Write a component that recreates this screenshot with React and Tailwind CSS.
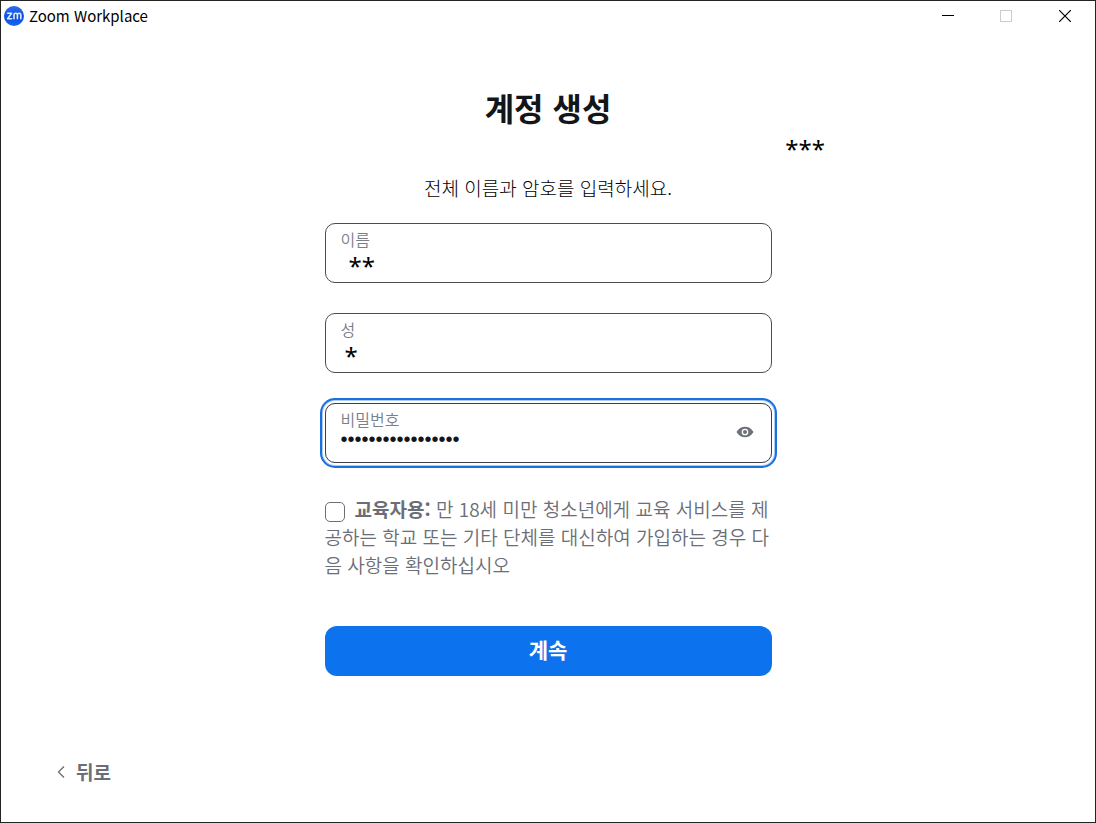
import { useState } from 'react'

const FieldBox = ({ id, label, children, active }) => (
  <div
    className={
      active
        ? 'flex h-[60px] items-center rounded-[10px] border border-[#3d3f46] px-[15px] shadow-[0_0_0_2px_#fff,0_0_0_3px_#a9cbf6,0_0_0_5px_#1a70dc]'
        : 'flex h-[60px] items-center rounded-[10px] border border-[#4a4c52] px-[15px]'
    }
  >
    <div className="flex h-full min-w-0 flex-1 flex-col pt-[5px]">
      <label htmlFor={id} className="text-[16px] leading-5 font-[350] text-[#7a808a]">
        {label}
      </label>
      {children}
    </div>
    {active && (
      <button type="button" aria-label="비밀번호 표시" className="mr-[2px] shrink-0">
        <svg width="18" height="18" viewBox="0 0 18 18" fill="none">
          <path d="M0.5 8C2.5 4.500 5.5 2.800 9 2.800S15.500 4.500 17.500 8C15.500 11.500 12.500 13.200 9 13.200S2.500 11.500 0.500 8Z" fill="#6e7179" />
          <circle cx="9" cy="8" r="2.700" stroke="#fff" strokeWidth="1.300" />
        </svg>
      </button>
    )}
  </div>
)

const TitleBar = () => (
  <header className="flex h-[30px] items-center justify-between pl-[3px]">
    <div className="flex items-center gap-[5px]">
      <svg width="20" height="20" viewBox="0 0 20 20">
        <defs>
          <linearGradient id="logo" x1="0" y1="0" x2="0" y2="1">
            <stop offset="0" stopColor="#2f6bea" />
            <stop offset="0.6" stopColor="#0b50e0" />
            <stop offset="1" stopColor="#1b66f0" />
          </linearGradient>
        </defs>
        <circle cx="10" cy="10" r="10" fill="url(#logo)" />
        <g fill="none" stroke="#dfe9ff" strokeWidth="1.600" strokeLinecap="round" strokeLinejoin="round">
          <path d="M3.600 7.300H7.600L3.600 12.700H7.600" />
          <path d="M10 12.700V9C10 6.700 13.400 6.700 13.400 9V12.700M13.400 9C13.400 6.700 16.800 6.700 16.800 9V12.700" />
        </g>
      </svg>
      <span className="text-[15px] leading-5 text-black">Zoom Workplace</span>
    </div>
    <div className="flex h-full items-center">
      <button type="button" aria-label="최소화" className="flex h-full w-[58px] items-center justify-center">
        <svg width="12" height="12" viewBox="0 0 12 12" stroke="#000" shapeRendering="crispEdges">
          <path d="M0 5.500H12" />
        </svg>
      </button>
      <button type="button" aria-label="최대화" disabled className="flex h-full w-[58px] items-center justify-center">
        <svg width="12" height="12" viewBox="0 0 12 12" fill="none" stroke="#ccc" shapeRendering="crispEdges">
          <rect x="0.500" y="0.500" width="11" height="11" />
        </svg>
      </button>
      <button type="button" aria-label="닫기" className="flex h-full w-[60px] items-center justify-center">
        <svg width="12" height="12" viewBox="0 0 12 12" stroke="#000" strokeWidth="1.200">
          <path d="M0 0L12 12M12 0L0 12" />
        </svg>
      </button>
    </div>
  </header>
)

export default function App() {
  const [firstName, setFirstName] = useState('**')
  const [lastName, setLastName] = useState('*')
  const [password, setPassword] = useState('password123456789')
  const [educator, setEducator] = useState(false)

  return (
    <div
      lang="ko"
      className="flex min-h-screen flex-col border border-[#242424] bg-white font-['Noto_Sans_CJK_KR',sans-serif]"
    >
      <TitleBar />

      <main className="mx-auto w-full max-w-[554px] pt-14">
        <h1 className="text-center text-[32px] leading-10 font-bold text-[#131619]">계정 생성</h1>
        <p className="pt-[6px] text-right font-['Noto_Sans',sans-serif] text-[24px] leading-8 text-black">***</p>

        <form className="mx-auto w-full max-w-[447px] pt-2" onSubmit={(e) => e.preventDefault()}>
          <p className="pb-5 text-center text-[19px] leading-[30px] font-light text-black">전체 이름과 암호를 입력하세요.</p>

          <div className="flex flex-col gap-[30px]">
            <FieldBox id="first-name" label="이름">
              <input
                id="first-name"
                value={firstName}
                onChange={(e) => setFirstName(e.target.value)}
                className="h-[34px] w-full pl-2 font-['Noto_Sans',sans-serif] text-[24px] text-black outline-none"
              />
            </FieldBox>
            <FieldBox id="last-name" label="성">
              <input
                id="last-name"
                value={lastName}
                onChange={(e) => setLastName(e.target.value)}
                className="h-[34px] w-full pl-1 font-['Noto_Sans',sans-serif] text-[24px] text-black outline-none"
              />
            </FieldBox>
            <FieldBox id="password" label="비밀번호" active>
              <input
                id="password"
                type="password"
                value={password}
                onChange={(e) => setPassword(e.target.value)}
                className="h-5 w-full font-['Liberation_Sans',sans-serif] text-[20px] leading-5 text-[#131619] outline-none"
              />
            </FieldBox>
          </div>

          {/* Educator confirmation */}
          <label className="mt-8 block text-[19px] leading-7 font-[350] text-[#6b6e76]">
            <input
              type="checkbox"
              checked={educator}
              onChange={(e) => setEducator(e.target.checked)}
              className="mr-[10px] h-5 w-5 appearance-none rounded-[5px] border border-[#6b6e76] align-middle checked:bg-[#0d72ed]"
            />
            <strong className="font-bold">교육자용:</strong> 만 18세 미만 청소년에게 교육 서비스를 제공하는 학교 또는 기타 단체를
            대신하여 가입하는 경우 다음 사항을 확인하십시오
          </label>

          <button
            type="submit"
            className="mt-[47px] h-[50px] w-full rounded-xl bg-[#0d72ed] pb-1 text-[21px] leading-7 font-bold text-white"
          >
            계속
          </button>
        </form>
      </main>

      <footer className="mt-auto px-14 pb-9">
        <button type="button" className="flex items-center gap-[11px] text-[19px] leading-7 font-bold text-[#6b6e76]">
          <svg width="8" height="12" viewBox="0 0 8 12" fill="none" stroke="#6b6e76" strokeWidth="1.300">
            <path d="M7 0.500L1.500 6L7 11.500" />
          </svg>
          뒤로
        </button>
      </footer>
    </div>
  )
}
